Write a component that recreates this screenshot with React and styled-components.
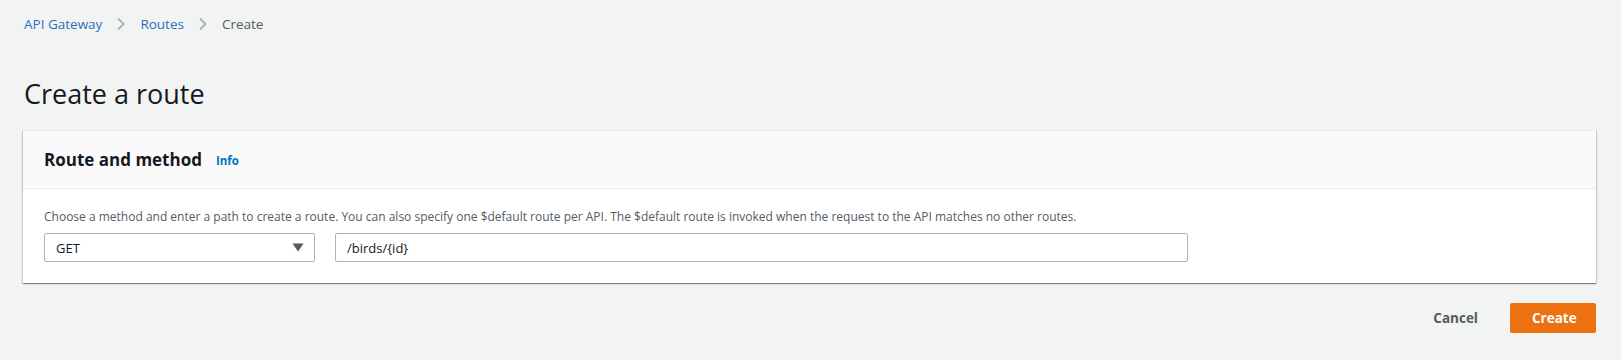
import React from 'react';
import styled, { createGlobalStyle } from 'styled-components';

const GlobalStyle = createGlobalStyle`
  html, body {
    margin: 0;
    padding: 0;
    background: #f2f3f3;
    font-family: "Open Sans", "Noto Sans", Arial, sans-serif;
    color: #16191f;
  }
`

const Page = styled.div`
  padding: 14px 25px 0 23px;
  min-height: 360px;
  box-sizing: border-box;
`

const Breadcrumbs = styled.nav`
  display: flex;
  align-items: center;
  gap: 14px;
  height: 20px;
  padding-left: 1px;
  font-size: 13.5px;
`

const Crumb = styled.span`
  color: ${props => props.current ? '#545b64' : '#2f6fbf'};
`

const Title = styled.h1`
  margin: 43px 0 0 1px;
  font-size: 27px;
  font-weight: 400;
  line-height: 34px;
  color: #16191f;
`

const Card = styled.section`
  margin-top: 19px;
  background: #fff;
  border-top: 1px solid #eaeded;
  box-shadow: 0 1px 1px 0 rgba(0, 28, 36, 0.3), 1px 1px 1px 0 rgba(0, 28, 36, 0.15), -1px 1px 1px 0 rgba(0, 28, 36, 0.15);
`

const CardHeader = styled.header`
  display: flex;
  align-items: center;
  gap: 14px;
  height: 57px;
  padding: 0 21px;
  background: #fafafa;
  border-bottom: 1px solid #eaeded;
`

const CardTitle = styled.h2`
  margin: 0;
  font-size: 17px;
  font-weight: 700;
  color: #16191f;
`

const InfoLink = styled.span`
  font-size: 11.5px;
  font-weight: 700;
  color: #0073bb;
  padding-top: 2px;
`

const CardBody = styled.div`
  padding: 20px 21px 21px;
`

const Description = styled.p`
  margin: 0 0 8px;
  font-size: 12px;
  line-height: 16px;
  color: #545b64;
`

const Fields = styled.div`
  display: flex;
  gap: 20px;
`

const Select = styled.div`
  display: flex;
  align-items: center;
  justify-content: space-between;
  width: 271px;
  height: 29px;
  box-sizing: border-box;
  padding: 0 10px 0 11px;
  border: 1px solid #aab7b8;
  border-radius: 2px;
  font-size: 13px;
  color: #16191f;
`

const Input = styled.div`
  display: flex;
  align-items: center;
  width: 853px;
  height: 29px;
  box-sizing: border-box;
  padding: 0 11px;
  border: 1px solid #aab7b8;
  border-radius: 2px;
  font-size: 13px;
  color: #16191f;
`

const Actions = styled.div`
  display: flex;
  justify-content: flex-end;
  align-items: center;
  gap: 32px;
  margin-top: 20px;
`

const Button = styled.button`
  height: 30px;
  border-radius: 2px;
  font-family: inherit;
  font-size: 13.5px;
  font-weight: 700;
  border: none;
  cursor: pointer;
  padding: ${props => props.primary ? '0 22px' : '0'};
  background: ${props => props.primary ? '#ec7211' : 'transparent'};
  color: ${props => props.primary ? '#fff' : '#545b64'};
  width: ${props => props.primary ? '86px' : 'auto'};
`

const Chevron = () => (
  <svg width="10" height="14" viewBox="0 0 10 14">
    <path d="M2 1.5 L7.5 7 L2 12.5" fill="none" stroke="#aab7b8" strokeWidth="2" />
  </svg>
)

const Caret = () => (
  <svg width="12" height="9" viewBox="0 0 12 9">
    <path d="M0.5 0.5 L11.5 0.5 L6 8.5 Z" fill="#545b64" />
  </svg>
)

class App extends React.Component {
  render() {
    return (
      <Page>
        <GlobalStyle />
        <Breadcrumbs>
          <Crumb>API Gateway</Crumb>
          <Chevron />
          <Crumb>Routes</Crumb>
          <Chevron />
          <Crumb current>Create</Crumb>
        </Breadcrumbs>

        <Title>Create a route</Title>

        <Card>
          <CardHeader>
            <CardTitle>Route and method</CardTitle>
            <InfoLink>Info</InfoLink>
          </CardHeader>
          <CardBody>
            <Description>
              Choose a method and enter a path to create a route. You can also specify one $default route per API. The $default route is invoked when the request to the API matches no other routes.
            </Description>
            <Fields>
              <Select>
                <span>GET</span>
                <Caret />
              </Select>
              <Input>/birds/{'{id}'}</Input>
            </Fields>
          </CardBody>
        </Card>

        <Actions>
          <Button>Cancel</Button>
          <Button primary>Create</Button>
        </Actions>
      </Page>
    )
  }
}

export default App;
